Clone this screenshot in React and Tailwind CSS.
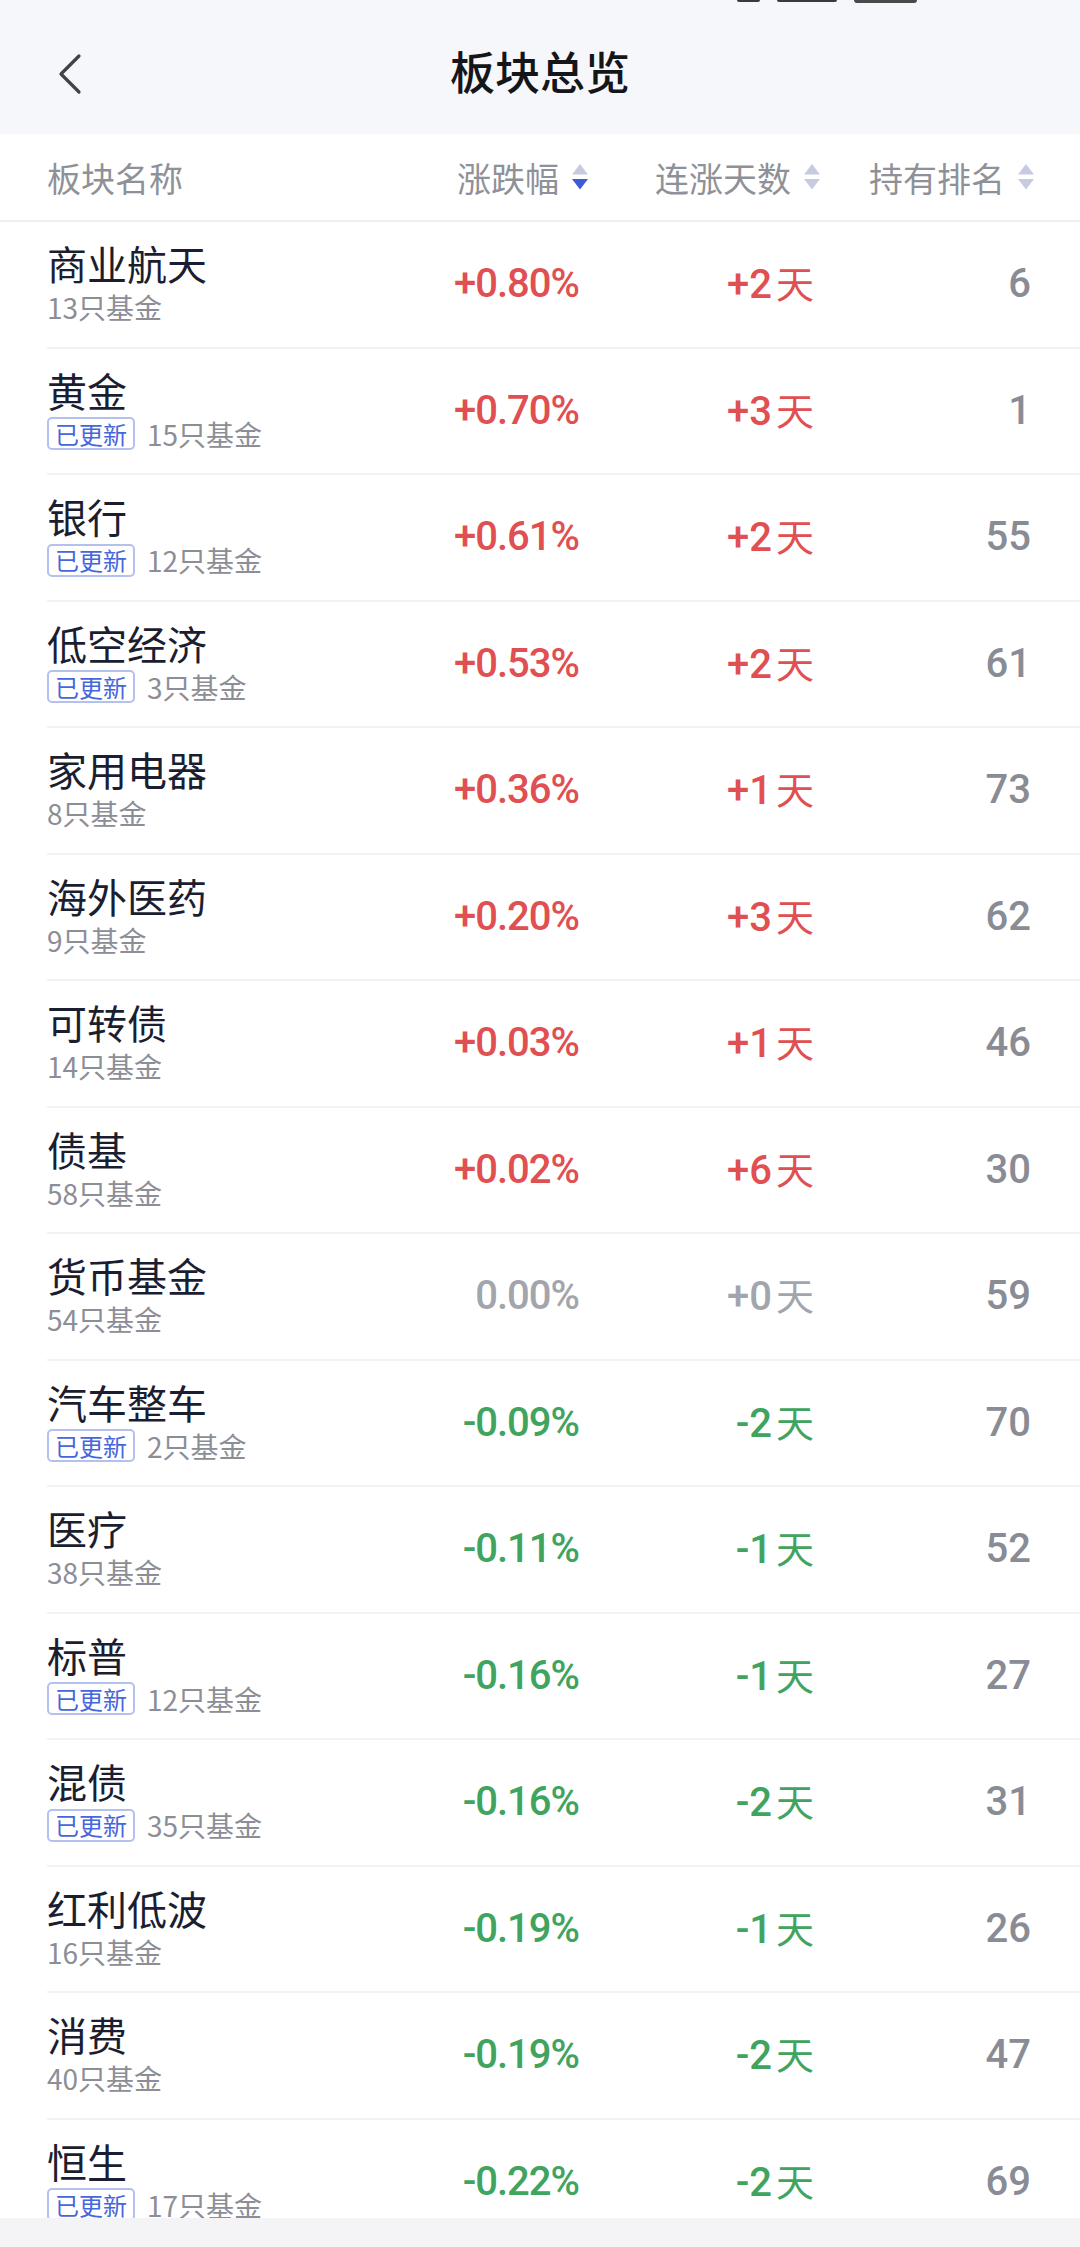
import React from 'react';

const rows = [
  { name: '商业航天', funds: 13, updated: false, pct: '+0.80%', days: '+2', rank: 6, trend: 'up' },
  { name: '黄金', funds: 15, updated: true, pct: '+0.70%', days: '+3', rank: 1, trend: 'up' },
  { name: '银行', funds: 12, updated: true, pct: '+0.61%', days: '+2', rank: 55, trend: 'up' },
  { name: '低空经济', funds: 3, updated: true, pct: '+0.53%', days: '+2', rank: 61, trend: 'up' },
  { name: '家用电器', funds: 8, updated: false, pct: '+0.36%', days: '+1', rank: 73, trend: 'up' },
  { name: '海外医药', funds: 9, updated: false, pct: '+0.20%', days: '+3', rank: 62, trend: 'up' },
  { name: '可转债', funds: 14, updated: false, pct: '+0.03%', days: '+1', rank: 46, trend: 'up' },
  { name: '债基', funds: 58, updated: false, pct: '+0.02%', days: '+6', rank: 30, trend: 'up' },
  { name: '货币基金', funds: 54, updated: false, pct: '0.00%', days: '+0', rank: 59, trend: 'flat' },
  { name: '汽车整车', funds: 2, updated: true, pct: '-0.09%', days: '-2', rank: 70, trend: 'down' },
  { name: '医疗', funds: 38, updated: false, pct: '-0.11%', days: '-1', rank: 52, trend: 'down' },
  { name: '标普', funds: 12, updated: true, pct: '-0.16%', days: '-1', rank: 27, trend: 'down' },
  { name: '混债', funds: 35, updated: true, pct: '-0.16%', days: '-2', rank: 31, trend: 'down' },
  { name: '红利低波', funds: 16, updated: false, pct: '-0.19%', days: '-1', rank: 26, trend: 'down' },
  { name: '消费', funds: 40, updated: false, pct: '-0.19%', days: '-2', rank: 47, trend: 'down' },
  { name: '恒生', funds: 17, updated: true, pct: '-0.22%', days: '-2', rank: 69, trend: 'down' },
];

const cjk = "font-['Noto_Sans_CJK_SC','Noto_Sans',sans-serif]";
const num = "font-['Roboto','Noto_Sans_CJK_SC',sans-serif]";

const trendColor = {
  up: 'text-[#e04f51]',
  down: 'text-[#40a45f]',
  flat: 'text-[#a3a5ad]',
};

function SortIcon({ active }) {
  return (
    <svg width="16" height="26" viewBox="0 0 16 26" className="shrink-0">
      <path d="M8 0 L16 10.5 L0 10.5 Z" fill="#c8cae2" />
      <path d="M0 15 L16 15 L8 25.5 Z" fill={active ? '#3d5bd9' : '#c8cae2'} />
    </svg>
  );
}

function HeadCell({ label, active, width }) {
  return (
    <div className={`${width} flex items-center justify-end gap-[13px] -mr-[3px]`}>
      <span>{label}</span>
      <SortIcon active={active} />
    </div>
  );
}

function Row({ row }) {
  const color = trendColor[row.trend];
  return (
    <div className="h-[126.5px] pl-[47px] shrink-0">
      <div className="h-full flex items-center pr-[49px] border-b-2 border-[#f1f2f5]">
        <div className="flex-1 flex flex-col">
          <div className={`${cjk} text-[40px] leading-[46px] text-[#1b1e31]`}>{row.name}</div>
          <div className="flex items-center h-[42px]">
            {row.updated && (
              <span className={`${cjk} mr-[12px] h-[33px] px-[6px] flex items-center rounded-[5px] border-2 border-[#b4c1ef] text-[24px] text-[#4566dc]`}>
                已更新
              </span>
            )}
            <span className={`${cjk} text-[28px] text-[#8c8e97]`}>{row.funds}只基金</span>
          </div>
        </div>
        <div className={`${num} w-[235px] text-right text-[40px] font-medium tracking-[-1px] ${color}`}>
          {row.pct}
        </div>
        <div className={`w-[235px] text-right text-[40px] ${color}`}>
          <span className={`${num} font-medium`}>{row.days}</span>
          <span className={`${cjk} ml-[4px] text-[38px]`}>天</span>
        </div>
        <div className={`${num} w-[217px] text-right text-[40px] font-medium text-[#8a8c95]`}>{row.rank}</div>
      </div>
    </div>
  );
}

export default function App() {
  return (
    <div className="w-[1080px] h-[2247px] flex flex-col bg-white overflow-hidden">
      {/* title bar */}
      <div className="relative h-[134px] shrink-0 bg-[#f6f7fb] flex items-center justify-center">
        <div className="absolute top-0 left-[737px] flex items-start gap-[17px]">
          <div className="w-[23px] h-[2px] bg-[#3a3a3a] rounded-b" />
          <div className="w-[60px] h-[2px] bg-[#3a3a3a] rounded-b" />
          <div className="w-[63px] h-[3px] bg-[#4a4a4a] rounded-b-full" />
        </div>
        <button className="absolute left-[56px] top-[53px] w-[28px] h-[42px] flex items-center justify-center">
          <svg width="26" height="42" viewBox="0 0 26 42" fill="none">
            <path d="M22 3 L4 21 L22 39" stroke="#404246" strokeWidth="3.2" strokeLinecap="round" strokeLinejoin="round" />
          </svg>
        </button>
        <h1 className={`${cjk} text-[45px] font-medium text-[#15161a] mt-[8px]`}>板块总览</h1>
      </div>

      {/* column header */}
      <div className={`${cjk} h-[88px] shrink-0 flex items-center pl-[47px] pr-[49px] border-b-2 border-[#eeeff2] text-[34px] text-[#8f9198]`}>
        <div className="flex-1">板块名称</div>
        <HeadCell label="涨跌幅" active width="w-[235px]" />
        <HeadCell label="连涨天数" width="w-[235px]" />
        <HeadCell label="持有排名" width="w-[217px]" />
      </div>

      {/* list */}
      <div className="flex-1 flex flex-col overflow-hidden">
        {rows.map((row) => (
          <Row key={row.name} row={row} />
        ))}
      </div>

      {/* bottom nav strip */}
      <div className="h-[29px] shrink-0 bg-[#f4f4f6]" />
    </div>
  );
}
